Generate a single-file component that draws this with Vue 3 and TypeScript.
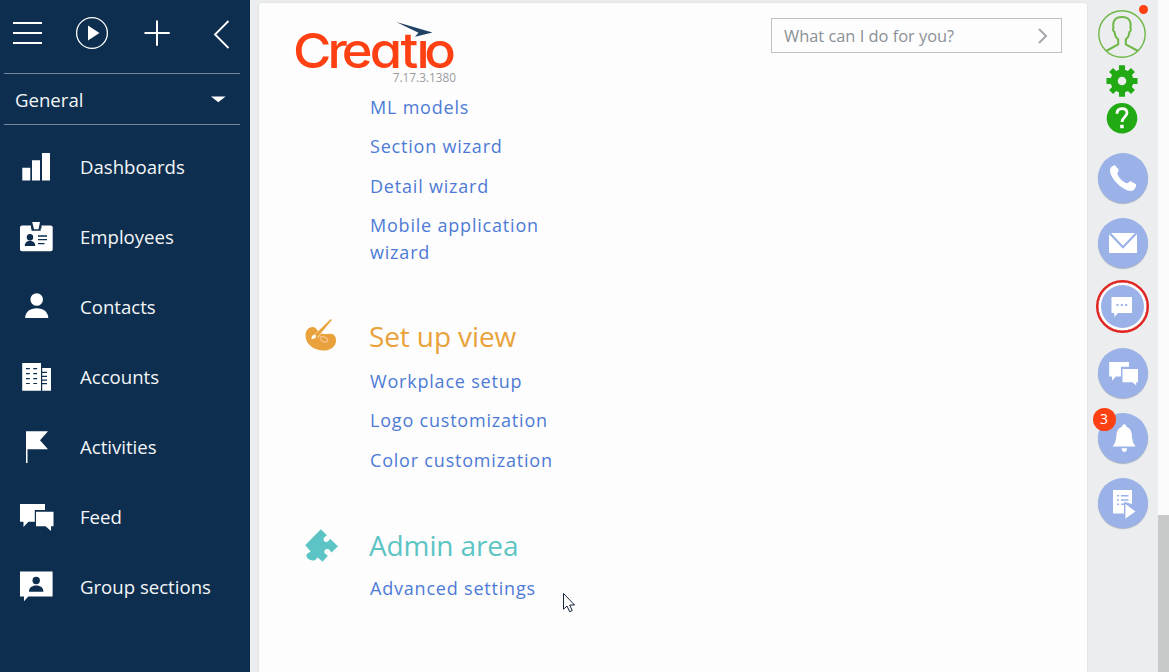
<script setup lang="ts">
interface NavItem {
  id: string
  label: string
}

interface LinkGroup {
  id: string
  title?: string
  links: string[]
}

const navItems: NavItem[] = [
  { id: 'dashboards', label: 'Dashboards' },
  { id: 'employees', label: 'Employees' },
  { id: 'contacts', label: 'Contacts' },
  { id: 'accounts', label: 'Accounts' },
  { id: 'activities', label: 'Activities' },
  { id: 'feed', label: 'Feed' },
  { id: 'groups', label: 'Group sections' },
]

const groups: LinkGroup[] = [
  { id: 'config', links: ['ML models', 'Section wizard', 'Detail wizard', 'Mobile application wizard'] },
  { id: 'view', title: 'Set up view', links: ['Workplace setup', 'Logo customization', 'Color customization'] },
  { id: 'admin', title: 'Admin area', links: ['Advanced settings'] },
]

const actions: string[] = ['call', 'email', 'chat', 'feed', 'bell', 'process']
</script>

<template>
  <div class="app">
    <nav class="sidebar">
      <div class="toolbar">
        <svg width="250" height="73" viewBox="0 0 250 73" fill="none" stroke="#fff">
          <path d="M13 23H42M13 33H42M13 43H42" stroke-width="2" />
          <circle cx="92" cy="33" r="15.4" stroke-width="1.3" />
          <path d="M88 25.5L99.5 33L88 40.5Z" fill="#fff" stroke="none" />
          <path d="M144.5 33H169.7M157 20.5V45.8" stroke-width="2" />
          <path d="M228.5 21L215 34.5L228.5 48" stroke-width="1.8" />
        </svg>
      </div>
      <div class="workplace">
        <span>General</span>
        <svg width="15" height="7" viewBox="0 0 15 7"><path d="M0 .5H14.6L7.3 6.3Z" fill="#fff" /></svg>
      </div>
      <ul class="nav">
        <li v-for="item in navItems" :key="item.id">
          <svg class="nav-icon" viewBox="0 0 36 36" fill="#fff">
            <template v-if="item.id === 'dashboards'">
              <path d="M4.3 18.7h8V31.6h-8zM14 11.3h8V31.6h-8zM24 4h8V31.6h-8z" />
            </template>
            <template v-else-if="item.id === 'employees'">
              <rect x="2" y="6.5" width="32.7" height="25.7" rx="2" />
              <path d="M13 6H23.5V9.5H22.7V11.8H13.5V9.5H13Z" fill="#0d2e4e" />
              <path d="M14.2 3H22L20.5 10.2H16Z" />
              <circle cx="12" cy="18.2" r="3.2" fill="#0d2e4e" />
              <path d="M6.7 27c0-3 2-5.3 5.3-5.3s5.3 2.3 5.3 5.3z" fill="#0d2e4e" />
              <path d="M20 17h9M20 20.7h9M20 24.6h6.5" stroke="#0d2e4e" stroke-width="1.3" />
            </template>
            <template v-else-if="item.id === 'contacts'">
              <circle cx="18.7" cy="10.5" r="6.3" />
              <path d="M7.1 29C7.3 23 12 19.3 18.7 19.3S30.1 23 30.3 29Z" />
            </template>
            <template v-else-if="item.id === 'accounts'">
              <path d="M4.2 4H23V31.8H4.2zM24.2 9H33V31.8H24.2z" />
              <path d="M8 9.7h3.8M15.3 9.7h3.8M8 14.6h3.8M15.3 14.6h3.8M8 19.6h3.8M15.3 19.6h3.8M8 24.5h3.8M15.3 24.5h3.8M24 13.4h5M24 17.3h5M24 21.2h5M24 24.6h5" stroke="#0d2e4e" stroke-width="1.2" />
            </template>
            <template v-else-if="item.id === 'activities'">
              <path d="M8 2.3H30L22 11.2L30 20.3H9.5V34H8Z" />
            </template>
            <template v-else-if="item.id === 'feed'">
              <path d="M2 5H27V11H16.8V22.7H10.5L5.5 28V22.7H2Z" />
              <path d="M18 12.7H35.5V27.3H33V32L27.5 27.3H18Z" />
            </template>
            <template v-else>
              <path d="M2 2.4H34.6V27.6H10.3L6 32.3V27.6H2Z" />
              <circle cx="18.2" cy="11.5" r="3.7" fill="#0d2e4e" />
              <path d="M11 22.8c0-4 2.8-6.2 7.2-6.2s7.2 2.2 7.2 6.2z" fill="#0d2e4e" />
            </template>
          </svg>
          <span>{{ item.label }}</span>
        </li>
      </ul>
    </nav>

    <main class="stage">
      <section class="panel">
        <header class="header">
          <div class="brand">
            <svg class="logo" width="164" height="54" viewBox="0 0 164 54" role="img" aria-label="Creatio">
              <text class="wordmark" transform="scale(1.08 1)" x="-1.8 30 43.2 69.2 97.6 112.4 119.6" y="49.8">Creatio</text>
              <path d="M118 9H140V22H118Z" fill="#fdfdfd" />
              <path d="M101.3 4L137.5 14.5L120 18.7L123.5 14.8Z" fill="#1d4064" />
            </svg>
            <span class="version">7.17.3.1380</span>
          </div>
          <div class="search">
            <span>What can I do for you?</span>
            <svg width="12" height="16" viewBox="0 0 12 16"><path d="M2 1L9 8L2 15" fill="none" stroke="#a4a7ac" stroke-width="2" /></svg>
          </div>
        </header>

        <div v-for="group in groups" :key="group.id" class="group" :class="group.id">
          <h2 v-if="group.title">
            <svg v-if="group.id === 'view'" class="group-icon" viewBox="0 0 36 36">
              <path d="M1.5 17.5C1.5 12 5 9 8.5 9C13 9 13 14 17.5 15.5C21 16.6 24 15 28 16C31.5 17 32.5 21 31.8 24.5C30.5 30 24.5 33 18.5 32.5C9 32 1.5 25.5 1.5 17.5Z" fill="#e9a23b" />
              <path d="M16.3 19.2C18.5 17.5 23.5 19.5 23.8 22.3C23.5 24.7 19.5 24.7 17.8 22.8C16.6 21.5 15.5 20.5 16.3 19.2Z" fill="#e9a23b" stroke="#f7c4a0" stroke-width="1.1" />
              <path d="M10 17.5L26.6 1L28 2L13.5 19.5" fill="#e9a23b" stroke="#fdfdfd" stroke-width=".8" />
              <path d="M7.3 21C7.7 18 9 16.2 11.2 16.8C13 18.2 11.5 21.5 7.3 21Z" fill="#fff" />
              <path d="M11 16.5L26.8 1.3L27.7 2.1L13.5 18.8Z" fill="#e9a23b" />
            </svg>
            <svg v-else class="group-icon" viewBox="0 0 36 36" fill="#5cc4c4">
              <path d="M16.8 1.2L23 7.3C22.3 8.5 20.4 8.5 19.7 10.5C18.9 13.2 21.5 15 23.8 13.6C25 12.8 25 11.4 26.3 11L34 18.3L27.5 24.5C26.3 23.8 26.4 22.2 24.5 21.3C22 20.3 19.5 22.5 20.6 25C21.4 26.8 23.4 26.5 23.8 28L18.5 33.7L13.8 29.5C12.6 29.7 12.5 31.5 10.7 32.2C7 33.4 1.8 30.4 2.5 26.8C3 24.8 6.4 24.6 6.5 23.2L1.2 17.2Z" />
            </svg>
            <span>{{ group.title }}</span>
          </h2>
          <a v-for="link in group.links" :key="link">{{ link }}</a>
        </div>
      </section>
    </main>

    <aside class="rail">
      <div class="profile">
        <svg width="50" height="50" viewBox="0 0 50 50" fill="none" stroke="#6fb848">
          <circle cx="25" cy="25" r="23.2" stroke-width="1.4" />
          <path d="M9.2 42L21.2 35.5V30.5C18.8 28.5 17.7 26 17.5 23C15.6 22 16 19.5 16.4 19C15.4 11.5 18.5 8 25 8S34.4 11.5 33.5 19C34.1 20 34 22.3 32.5 23C32.2 26 31.2 28.5 28.8 30.5V35.5L41 42" stroke-width="2" />
        </svg>
        <i class="dot" />
      </div>
      <svg class="gear" viewBox="-16 -16 32 32" fill="#22aa14">
        <path d="M-3 -15.7H3V-10.8H-3zM-3 10.8H3V15.7H-3zM-15.5 -3H-10.5V3H-15.5zM10.5 -3H15.5V3H10.5z" />
        <g transform="rotate(45)">
          <path d="M-2.8 -15.5H2.8V-10.5H-2.8zM-2.8 10.5H2.8V15.5H-2.8zM-15.5 -2.8H-10.5V2.8H-15.5zM10.5 -2.8H15.5V2.8H10.5z" />
        </g>
        <circle r="7.9" fill="none" stroke="#22aa14" stroke-width="7.2" />
      </svg>
      <svg class="help" viewBox="0 0 32 32">
        <circle cx="16" cy="16.3" r="15.3" fill="#22aa14" />
        <path d="M11 11.8C11 8.3 13 6.7 16 6.7C19.2 6.7 21 8.6 21 11.1C21 14.9 16 15.1 16 20" fill="none" stroke="#fff" stroke-width="2.8" />
        <rect x="14.2" y="22.8" width="3.5" height="3.4" fill="#fff" />
      </svg>
      <div class="actions">
        <div v-for="action in actions" :key="action" class="action" :class="action">
          <svg width="50" height="50" viewBox="0 0 50 50" fill="#fff">
            <path v-if="action === 'call'" d="M12 17.5C12 14.5 14.5 12.3 17 12.2L20.7 16.8C21 18.2 19.4 19.3 19.3 20.5C19.5 23.5 25.5 29.5 28.7 30.3C30 30.5 31.4 28.3 32.7 28.3L38 31.3C38.5 35 35.5 38 33 38C25 37.8 12 25.5 12 17.5Z" />
            <template v-else-if="action === 'email'">
              <rect x="11" y="15" width="28" height="20" />
              <path d="M11.5 15L25 29.2L38.5 15" fill="none" stroke="#9bb2e8" stroke-width="2.3" />
            </template>
            <template v-else-if="action === 'chat'">
              <path d="M14.5 16H35V32H21L17.3 36V32H14.5Z" />
              <path d="M19.5 24h2M23.8 24h2M28.2 24h2" stroke="#9bb2e8" stroke-width="1.8" />
            </template>
            <template v-else-if="action === 'feed'">
              <path d="M11.2 14H31V18.7H23V28.5H18L14 32.7V28.5H11.2Z" />
              <path d="M24.5 21H40V34.2H38.2V37.5L34.5 34.2H24.5Z" />
            </template>
            <path v-else-if="action === 'bell'" d="M26.2 11.2C27.7 11.2 28.2 12.4 28.2 13.4C32 15 33.5 18 33.8 21.5C34.2 28 35 29.5 37.7 33.6H14.6C17.4 29.5 18 28 18.5 21.5C18.8 18 20.3 15 24.2 13.4C24.2 12.4 24.8 11.2 26.2 11.2ZM23.6 35.3H29C29 37.5 27.8 39 26.3 39S23.6 37.5 23.6 35.3Z" />
            <template v-else>
              <path d="M15 12H34V26L26 23.8V35.5H15Z" />
              <path d="M19 17.8h2M23 17.8h7.5M19 22h2M23 22h7.5M19 26.2h2M23 26.2h4" stroke="#9bb2e8" stroke-width="1.4" />
              <path d="M27 25.3L38 33.5L27 41.3Z" stroke="#9bb2e8" stroke-width=".8" />
            </template>
          </svg>
          <span v-if="action === 'bell'" class="badge">3</span>
        </div>
      </div>
    </aside>

    <div class="scrollbar"><div class="thumb" /></div>

    <svg class="cursor" viewBox="0 0 14 20">
      <path d="M1.5 .5V16.2L5 13L7.7 18.7L10.2 17.5L7.7 12H12.5Z" fill="#fff" stroke="#14233b" stroke-width="1" />
    </svg>
  </div>
</template>

<style>
body {
  margin: 0;
  overflow: hidden;
}
</style>

<style scoped>
.app {
  position: relative;
  display: flex;
  width: 1169px;
  height: 672px;
  overflow: hidden;
  background: #ebedee;
  font-family: "Open Sans", "Noto Sans", sans-serif;
}

.sidebar {
  width: 250px;
  background: #0d2e4e;
  color: #f4f6f8;
  font-size: 18.6px;
}

.toolbar {
  height: 73px;
}

.toolbar svg {
  display: block;
}

.workplace {
  display: flex;
  align-items: center;
  justify-content: space-between;
  height: 50px;
  margin: 0 10px 0 4px;
  padding: 0 14px 0 11px;
  border-top: 1px solid #728599;
  border-bottom: 1px solid #728599;
}

.nav {
  margin: 7px 0 0;
  padding: 0;
  list-style: none;
}

.nav li {
  display: flex;
  align-items: center;
  gap: 26px;
  height: 70px;
  padding-left: 18px;
}

.nav li span {
  padding-bottom: 2px;
}

.nav-icon {
  width: 36px;
  height: 36px;
}

.stage {
  width: 828px;
  padding: 3px 0 0 9px;
}

.panel {
  height: 669px;
  border-radius: 3px 3px 0 0;
  background: #fdfdfd;
  box-shadow: 0 0 2px #d2d5d7;
}

.header {
  display: flex;
  justify-content: space-between;
  height: 90.6px;
}

.brand {
  display: flex;
  flex-direction: column;
  align-items: flex-end;
  padding: 15px 0 0 36px;
}

.logo {
  display: block;
  overflow: visible;
}

.wordmark {
  fill: #ff4013;
  font-family: Inter, sans-serif;
  font-size: 48.5px;
  font-weight: 480;
  font-feature-settings: "cv11";
}

.version {
  margin-top: -3px;
  margin-right: 3px;
  color: #999ca1;
  font-size: 11.8px;
  line-height: 16px;
}

.search {
  display: flex;
  align-items: center;
  justify-content: space-between;
  box-sizing: border-box;
  width: 291px;
  height: 35px;
  margin: 15px 25px 0 0;
  padding: 0 12px;
  border: 1px solid #c0c1c4;
  color: #8b9096;
  font-size: 16.4px;
}

.group {
  width: 300px;
  padding-left: 111px;
}

.group h2 {
  display: flex;
  align-items: center;
  gap: 29px;
  height: 40px;
  margin: 49.5px 0 12px -66px;
  font-size: 28px;
  font-weight: 400;
  letter-spacing: -0.12px;
}

.group.admin h2 {
  margin-top: 51px;
  margin-bottom: 10.5px;
}

.group-icon {
  width: 36px;
  height: 36px;
}

.admin .group-icon {
  margin-top: 2px;
}

.group a {
  display: block;
  width: 190px;
  margin-bottom: 12.5px;
  color: #4d7ad6;
  font-size: 18px;
  line-height: 27px;
  letter-spacing: 0.8px;
}

.group a:last-child {
  margin-bottom: 0;
}

.view h2 {
  color: #e9a23b;
}

.admin h2 {
  color: #5cc4c4;
}

.rail {
  display: flex;
  flex-direction: column;
  align-items: center;
  width: 69px;
  padding-right: 2px;
}

.profile {
  position: relative;
  height: 50px;
  margin-top: 9px;
}

.dot {
  position: absolute;
  top: -4px;
  left: 42px;
  width: 9px;
  height: 9px;
  border-radius: 50%;
  background: #ff4013;
}

.gear {
  width: 32px;
  height: 32px;
  margin-top: 6px;
}

.help {
  width: 32px;
  height: 32px;
  margin-top: 5px;
}

.actions {
  display: flex;
  flex-direction: column;
  gap: 15px;
  margin: 19px 0 0 2px;
}

.action {
  position: relative;
  width: 50px;
  height: 50px;
  border-radius: 50%;
  background: #9bb2e8;
  box-shadow: 0 1px 1px #a4afc4;
}

.action.chat {
  box-sizing: border-box;
  width: 53px;
  height: 53px;
  margin: -3px -2px 0;
  border: 2px solid #e2201c;
  box-shadow: inset 0 0 0 0.5px #e2201c, inset 0 0 0 3px #fff;
}

.chat svg {
  display: block;
  margin: -1px 0 0 -0.5px;
}

.badge {
  position: absolute;
  top: -5px;
  left: -5px;
  width: 23px;
  height: 23px;
  border-radius: 50%;
  background: #ff4013;
  color: #fff;
  font-size: 14px;
  line-height: 22px;
  text-align: center;
}

.scrollbar {
  display: flex;
  align-items: flex-end;
  width: 11px;
  background: #fbfbfb;
}

.thumb {
  width: 11px;
  height: 157px;
  background: #c8c9c9;
}

.cursor {
  position: absolute;
  top: 593px;
  left: 562px;
  width: 14px;
  height: 20px;
}
</style>
